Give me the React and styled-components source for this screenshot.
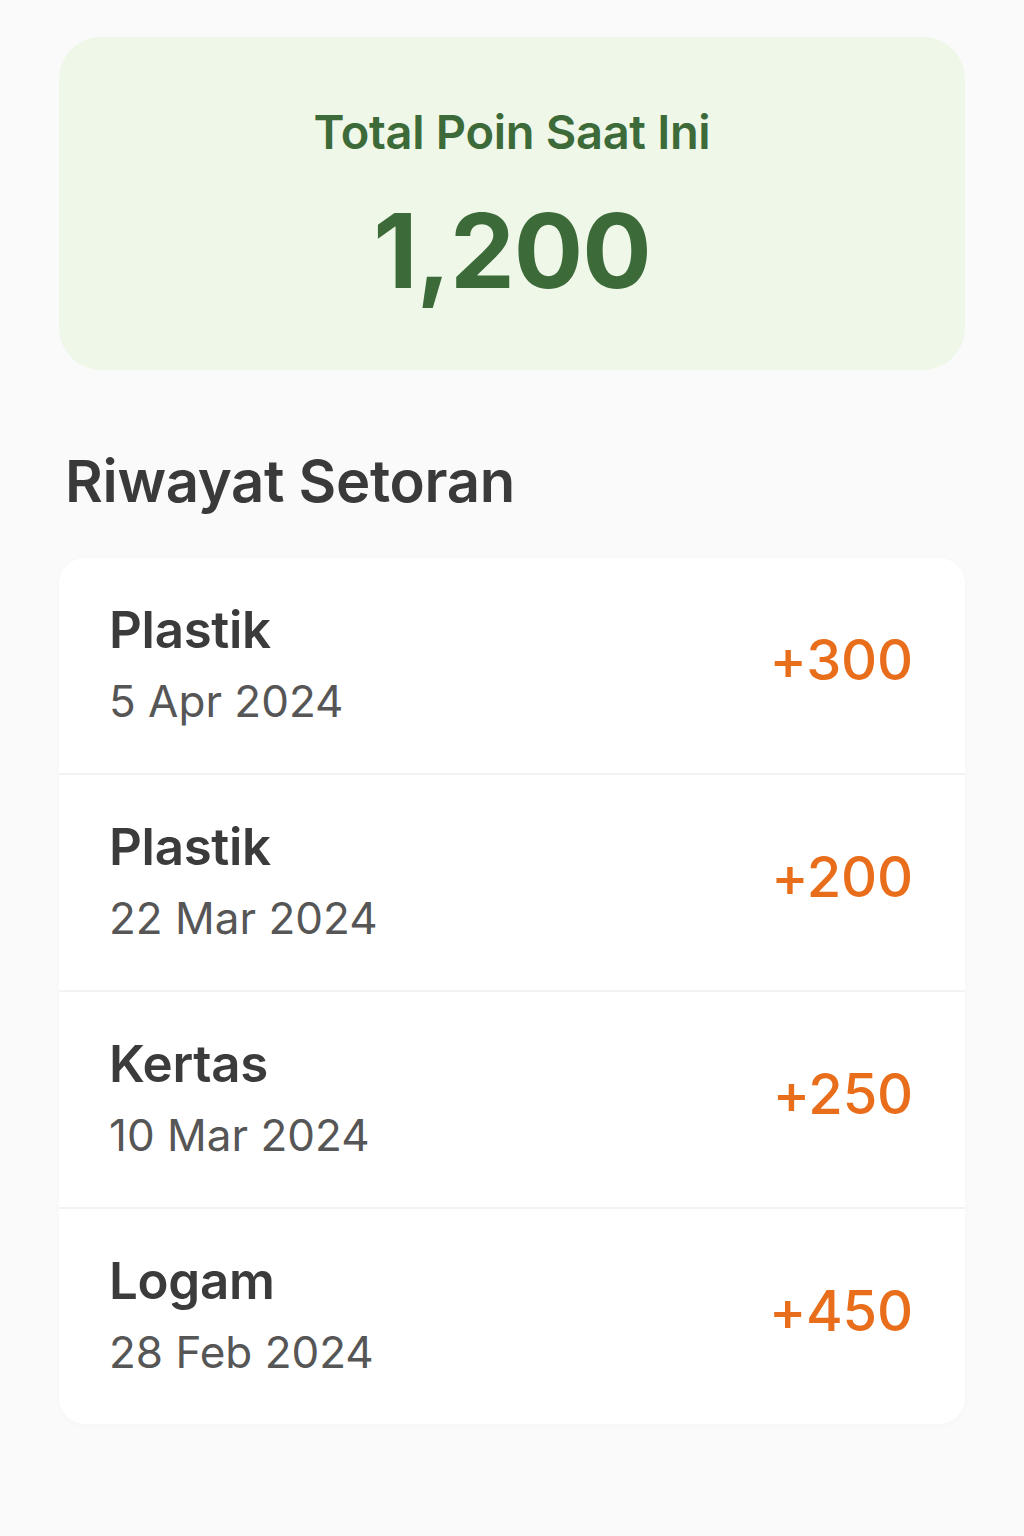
import React from "react";
import styled, { createGlobalStyle } from "styled-components";

const Global = createGlobalStyle`
  html, body { margin: 0; padding: 0; background: #fafafa; }
  body { font-family: Inter, "Noto Sans", sans-serif; -webkit-font-smoothing: antialiased; }
`;

const Page = styled.div`
  min-height: 1536px;
  padding: 37px 59px 0;
  box-sizing: border-box;
  display: flex;
  flex-direction: column;
`;

const PointsCard = styled.section`
  height: 333px;
  box-sizing: border-box;
  background: #eef7e8;
  border-radius: 42px;
  display: flex;
  flex-direction: column;
  align-items: center;
  padding-top: 66px;
  color: #3c6a39;
`;

const PointsLabel = styled.div`
  font-size: 47px;
  font-weight: 600;
  line-height: 58px;
  letter-spacing: -0.3px;
`;

const PointsValue = styled.div`
  font-size: 103px;
  font-weight: 700;
  line-height: 120px;
  margin-top: 30px;
  letter-spacing: -1px;
`;

const SectionTitle = styled.h2`
  margin: 76px 0 0 6px;
  font-size: 58px;
  font-weight: 600;
  line-height: 70px;
  color: #3a3a3a;
  letter-spacing: -0.3px;
`;

const List = styled.div`
  margin-top: 42px;
  background: #ffffff;
  border-radius: 26px;
  box-shadow: 0 1px 6px rgba(0, 0, 0, 0.025);
  overflow: hidden;
`;

const Row = styled.div`
  height: 215px;
  display: flex;
  align-items: center;
  justify-content: space-between;
  padding: 0 52px 0 50px;
  border-top: ${(p) => (p.$first ? "none" : "2px solid #f2f2f2")};
`;

const Info = styled.div`
  display: flex;
  flex-direction: column;
  padding-bottom: 5px;
`;

const Material = styled.div`
  font-size: 51px;
  font-weight: 600;
  line-height: 62px;
  color: #3b3b3b;
  letter-spacing: -0.3px;
`;

const DateText = styled.div`
  font-size: 44px;
  font-weight: 400;
  line-height: 54px;
  color: #565656;
  margin-top: 13px;
`;

const Amount = styled.div`
  font-size: 56px;
  font-weight: 500;
  color: #e86e1c;
  letter-spacing: -0.2px;
  margin-bottom: 12px;
`;

const items = [
  { name: "Plastik", date: "5 Apr 2024", pts: "+300" },
  { name: "Plastik", date: "22 Mar 2024", pts: "+200" },
  { name: "Kertas", date: "10 Mar 2024", pts: "+250" },
  { name: "Logam", date: "28 Feb 2024", pts: "+450" },
];

export default function App() {
  return (
    <>
      <Global />
      <Page>
        <PointsCard>
          <PointsLabel>Total Poin Saat Ini</PointsLabel>
          <PointsValue>1,200</PointsValue>
        </PointsCard>
        <SectionTitle>Riwayat Setoran</SectionTitle>
        <List>
          {items.map((it, i) => (
            <Row key={i} $first={i === 0}>
              <Info>
                <Material>{it.name}</Material>
                <DateText>{it.date}</DateText>
              </Info>
              <Amount>{it.pts}</Amount>
            </Row>
          ))}
        </List>
      </Page>
    </>
  );
}
